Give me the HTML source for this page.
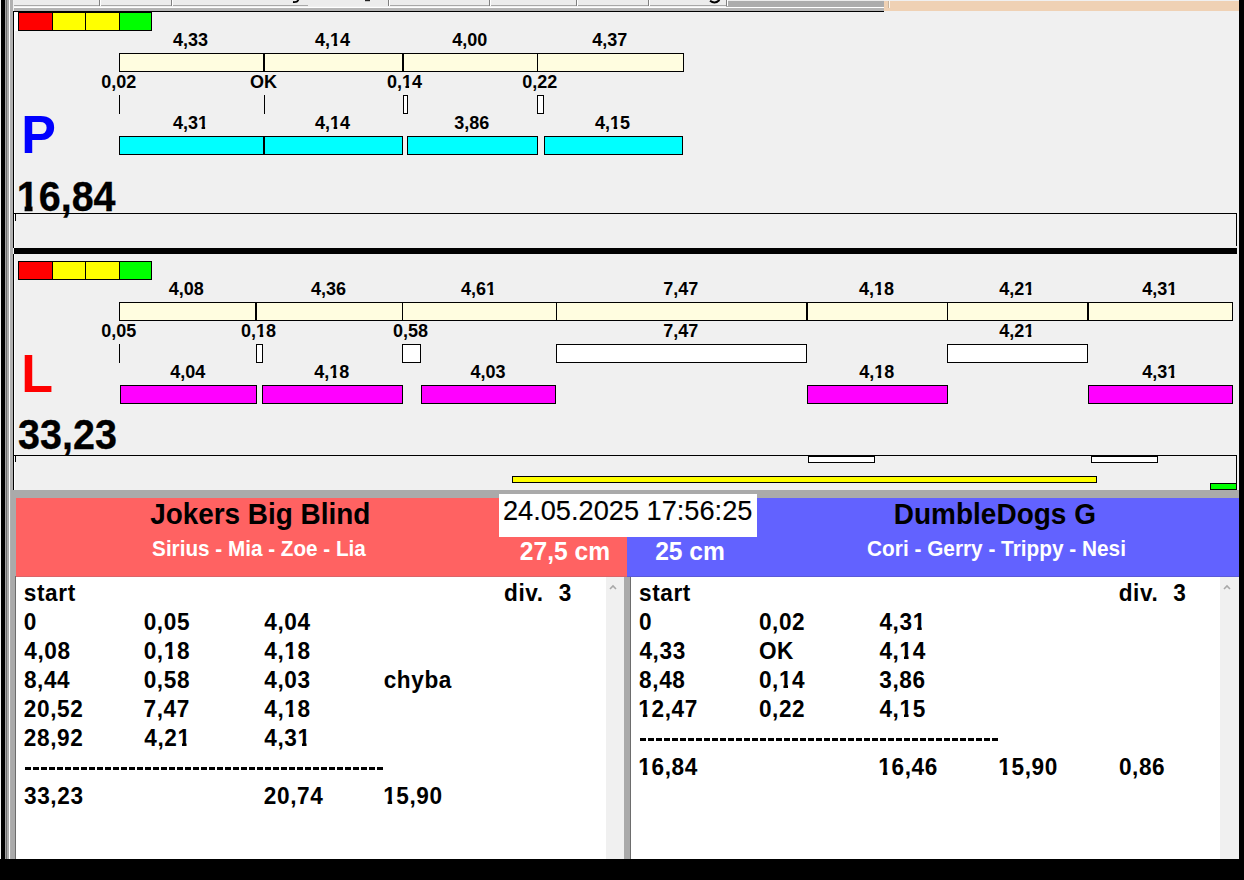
<!DOCTYPE html><html><head><meta charset="utf-8"><style>
html,body{margin:0;padding:0;width:1244px;height:880px;overflow:hidden;background:#f0f0f0;position:relative;font-family:"Liberation Sans",sans-serif}
div{box-sizing:border-box}
</style></head><body>
<div style="position:absolute;left:14px;top:0px;width:870px;height:6px;background:#ececec"></div>
<div style="position:absolute;left:14px;top:5px;width:294px;height:1px;background:#a8a8a8"></div>
<div style="position:absolute;left:388px;top:5px;width:496px;height:1px;background:#a8a8a8"></div>
<div style="position:absolute;left:726px;top:1px;width:158px;height:6px;background:#acacac"></div>
<div style="position:absolute;left:884px;top:1px;width:355px;height:10px;background:#efd1b4"></div>
<div style="position:absolute;left:99px;top:0px;width:1px;height:6px;background:#808080"></div>
<div style="position:absolute;left:100px;top:0px;width:1px;height:6px;background:#ffffff"></div>
<div style="position:absolute;left:171px;top:0px;width:1px;height:6px;background:#808080"></div>
<div style="position:absolute;left:172px;top:0px;width:1px;height:6px;background:#ffffff"></div>
<div style="position:absolute;left:388px;top:0px;width:1px;height:6px;background:#808080"></div>
<div style="position:absolute;left:389px;top:0px;width:1px;height:6px;background:#ffffff"></div>
<div style="position:absolute;left:489px;top:0px;width:1px;height:6px;background:#808080"></div>
<div style="position:absolute;left:490px;top:0px;width:1px;height:6px;background:#ffffff"></div>
<div style="position:absolute;left:576px;top:0px;width:1px;height:6px;background:#808080"></div>
<div style="position:absolute;left:577px;top:0px;width:1px;height:6px;background:#ffffff"></div>
<div style="position:absolute;left:648px;top:0px;width:1px;height:6px;background:#808080"></div>
<div style="position:absolute;left:649px;top:0px;width:1px;height:6px;background:#ffffff"></div>
<div style="position:absolute;left:726px;top:0px;width:1px;height:6px;background:#808080"></div>
<div style="position:absolute;left:727px;top:0px;width:1px;height:6px;background:#ffffff"></div>
<div style="position:absolute;left:14px;top:7px;width:870px;height:1px;background:#ffffff"></div>
<div style="position:absolute;left:14px;top:8px;width:870px;height:3px;background:#b4b4b4"></div>
<div style="position:absolute;left:13px;top:11px;width:871px;height:1px;background:#000"></div>
<div style="position:absolute;left:888px;top:1px;width:1px;height:7px;background:#c8b49e"></div>
<div style="position:absolute;left:889px;top:1px;width:1px;height:7px;background:#fff6ea"></div>
<svg style="position:absolute;left:706px;top:0px" width="16" height="5"><path d="M4 0.8 Q9 4.5 13.5 0" stroke="#000" stroke-width="2" fill="none"/></svg>
<svg style="position:absolute;left:290px;top:0px" width="10" height="5"><path d="M8.5 0 Q7 2.5 3 2" stroke="#000" stroke-width="1.8" fill="none"/></svg>
<svg style="position:absolute;left:364px;top:0px" width="8" height="4"><path d="M1 0.6 L6 0.6" stroke="#222" stroke-width="1.2" fill="none"/></svg>
<div style="position:absolute;left:1px;top:0px;width:4px;height:880px;background:#000"></div>
<div style="position:absolute;left:5px;top:0px;width:1px;height:880px;background:#a0a0a0"></div>
<div style="position:absolute;left:6px;top:0px;width:1px;height:880px;background:#707070"></div>
<div style="position:absolute;left:7px;top:0px;width:2px;height:880px;background:#aaaaaa"></div>
<div style="position:absolute;left:9px;top:0px;width:1px;height:880px;background:#ffffff"></div>
<div style="position:absolute;left:10px;top:0px;width:3px;height:880px;background:#b0b0b0"></div>
<div style="position:absolute;left:14px;top:12px;width:1px;height:478px;background:#ffffff"></div>
<div style="position:absolute;left:14px;top:12px;width:4px;height:19px;background:#ffffff"></div>
<div style="position:absolute;left:1239px;top:0px;width:5px;height:880px;background:#000"></div>
<div style="position:absolute;left:13px;top:11px;width:1px;height:237px;background:#000"></div>
<div style="position:absolute;left:18px;top:12px;width:35px;height:19px;background:#ff0000;border:1px solid #000;"></div>
<div style="position:absolute;left:52px;top:12px;width:34px;height:19px;background:#ffff00;border:1px solid #000;"></div>
<div style="position:absolute;left:85px;top:12px;width:35px;height:19px;background:#ffff00;border:1px solid #000;"></div>
<div style="position:absolute;left:119px;top:12px;width:33px;height:19px;background:#00ff00;border:1px solid #000;"></div>
<div style="position:absolute;left:119px;top:53px;width:145px;height:19px;background:#fffde0;border:1px solid #000;"></div>
<div style="position:absolute;left:264px;top:53px;width:139px;height:19px;background:#fffde0;border:1px solid #000;"></div>
<div style="position:absolute;left:403px;top:53px;width:135px;height:19px;background:#fffde0;border:1px solid #000;"></div>
<div style="position:absolute;left:537px;top:53px;width:147px;height:19px;background:#fffde0;border:1px solid #000;"></div>
<div style="position:absolute;left:172.93px;top:30.76px;font:bold 18px/18px 'Liberation Sans',sans-serif;color:#000;white-space:nowrap;letter-spacing:0px;">4,33</div>
<div style="position:absolute;left:315.03px;top:30.76px;font:bold 18px/18px 'Liberation Sans',sans-serif;color:#000;white-space:nowrap;letter-spacing:0px;">4,<span style="display:inline-block;clip-path:polygon(0 0,100% 0,100% 0.64em,0.40em 0.64em,0.40em 100%,0.20em 100%,0.20em 0.64em,0 0.64em)">1</span>4</div>
<div style="position:absolute;left:452.13px;top:30.76px;font:bold 18px/18px 'Liberation Sans',sans-serif;color:#000;white-space:nowrap;letter-spacing:0px;">4,00</div>
<div style="position:absolute;left:592.13px;top:30.76px;font:bold 18px/18px 'Liberation Sans',sans-serif;color:#000;white-space:nowrap;letter-spacing:0px;">4,37</div>
<div style="position:absolute;left:101.18px;top:72.76px;font:bold 18px/18px 'Liberation Sans',sans-serif;color:#000;white-space:nowrap;letter-spacing:0px;">0,02</div>
<div style="position:absolute;left:250.08px;top:72.76px;font:bold 18px/18px 'Liberation Sans',sans-serif;color:#000;white-space:nowrap;letter-spacing:0px;">OK</div>
<div style="position:absolute;left:386.88px;top:72.76px;font:bold 18px/18px 'Liberation Sans',sans-serif;color:#000;white-space:nowrap;letter-spacing:0px;">0,<span style="display:inline-block;clip-path:polygon(0 0,100% 0,100% 0.64em,0.40em 0.64em,0.40em 100%,0.20em 100%,0.20em 0.64em,0 0.64em)">1</span>4</div>
<div style="position:absolute;left:522.28px;top:72.76px;font:bold 18px/18px 'Liberation Sans',sans-serif;color:#000;white-space:nowrap;letter-spacing:0px;">0,22</div>
<div style="position:absolute;left:119px;top:95px;width:1px;height:19px;background:#000"></div>
<div style="position:absolute;left:264px;top:95px;width:1px;height:19px;background:#000"></div>
<div style="position:absolute;left:403px;top:95px;width:5px;height:19px;background:#fff;border:1px solid #000;"></div>
<div style="position:absolute;left:537px;top:95px;width:7px;height:19px;background:#fff;border:1px solid #000;"></div>
<div style="position:absolute;left:172.93px;top:113.76px;font:bold 18px/18px 'Liberation Sans',sans-serif;color:#000;white-space:nowrap;letter-spacing:0px;">4,3<span style="display:inline-block;clip-path:polygon(0 0,100% 0,100% 0.64em,0.40em 0.64em,0.40em 100%,0.20em 100%,0.20em 0.64em,0 0.64em)">1</span></div>
<div style="position:absolute;left:315.03px;top:113.76px;font:bold 18px/18px 'Liberation Sans',sans-serif;color:#000;white-space:nowrap;letter-spacing:0px;">4,<span style="display:inline-block;clip-path:polygon(0 0,100% 0,100% 0.64em,0.40em 0.64em,0.40em 100%,0.20em 100%,0.20em 0.64em,0 0.64em)">1</span>4</div>
<div style="position:absolute;left:454.25px;top:113.76px;font:bold 18px/18px 'Liberation Sans',sans-serif;color:#000;white-space:nowrap;letter-spacing:0px;">3,86</div>
<div style="position:absolute;left:595.03px;top:113.76px;font:bold 18px/18px 'Liberation Sans',sans-serif;color:#000;white-space:nowrap;letter-spacing:0px;">4,<span style="display:inline-block;clip-path:polygon(0 0,100% 0,100% 0.64em,0.40em 0.64em,0.40em 100%,0.20em 100%,0.20em 0.64em,0 0.64em)">1</span>5</div>
<div style="position:absolute;left:119px;top:136px;width:145px;height:19px;background:#00ffff;border:1px solid #000;"></div>
<div style="position:absolute;left:264px;top:136px;width:139px;height:19px;background:#00ffff;border:1px solid #000;"></div>
<div style="position:absolute;left:407px;top:136px;width:131px;height:19px;background:#00ffff;border:1px solid #000;"></div>
<div style="position:absolute;left:544px;top:136px;width:139px;height:19px;background:#00ffff;border:1px solid #000;"></div>
<div style="position:absolute;left:21.32px;top:109.28px;font:bold 52px/52px 'Liberation Sans',sans-serif;color:#0000ff;white-space:nowrap;letter-spacing:0px;transform:scale(1,1.02);transform-origin:0 44.02px;">P</div>
<div style="position:absolute;left:16.73px;top:177.56px;font:bold 39.5px/39.5px 'Liberation Sans',sans-serif;color:#000;white-space:nowrap;letter-spacing:0px;-webkit-text-stroke:0.3px #000;transform:scale(1,1.07);transform-origin:0 33.44px;"><span style="display:inline-block;clip-path:polygon(0 0,100% 0,100% 0.64em,0.40em 0.64em,0.40em 100%,0.20em 100%,0.20em 0.64em,0 0.64em)">1</span>6,84</div>
<div style="position:absolute;left:13px;top:213px;width:1224px;height:1px;background:#000"></div>
<div style="position:absolute;left:1236px;top:213px;width:1px;height:33px;background:#000"></div>
<div style="position:absolute;left:15px;top:214px;width:1px;height:7px;background:#000"></div>
<div style="position:absolute;left:14px;top:248px;width:1223px;height:6px;background:#000"></div>
<div style="position:absolute;left:13px;top:254px;width:1px;height:236px;background:#000"></div>
<div style="position:absolute;left:18px;top:261px;width:35px;height:19px;background:#ff0000;border:1px solid #000;"></div>
<div style="position:absolute;left:52px;top:261px;width:34px;height:19px;background:#ffff00;border:1px solid #000;"></div>
<div style="position:absolute;left:85px;top:261px;width:35px;height:19px;background:#ffff00;border:1px solid #000;"></div>
<div style="position:absolute;left:119px;top:261px;width:33px;height:19px;background:#00ff00;border:1px solid #000;"></div>
<div style="position:absolute;left:119px;top:302px;width:137px;height:19px;background:#fffde0;border:1px solid #000;"></div>
<div style="position:absolute;left:256px;top:302px;width:147px;height:19px;background:#fffde0;border:1px solid #000;"></div>
<div style="position:absolute;left:402px;top:302px;width:155px;height:19px;background:#fffde0;border:1px solid #000;"></div>
<div style="position:absolute;left:556px;top:302px;width:251px;height:19px;background:#fffde0;border:1px solid #000;"></div>
<div style="position:absolute;left:807px;top:302px;width:141px;height:19px;background:#fffde0;border:1px solid #000;"></div>
<div style="position:absolute;left:947px;top:302px;width:141px;height:19px;background:#fffde0;border:1px solid #000;"></div>
<div style="position:absolute;left:1088px;top:302px;width:145px;height:19px;background:#fffde0;border:1px solid #000;"></div>
<div style="position:absolute;left:168.83px;top:279.76px;font:bold 18px/18px 'Liberation Sans',sans-serif;color:#000;white-space:nowrap;letter-spacing:0px;">4,08</div>
<div style="position:absolute;left:311.03px;top:279.76px;font:bold 18px/18px 'Liberation Sans',sans-serif;color:#000;white-space:nowrap;letter-spacing:0px;">4,36</div>
<div style="position:absolute;left:461.03px;top:279.76px;font:bold 18px/18px 'Liberation Sans',sans-serif;color:#000;white-space:nowrap;letter-spacing:0px;">4,6<span style="display:inline-block;clip-path:polygon(0 0,100% 0,100% 0.64em,0.40em 0.64em,0.40em 100%,0.20em 100%,0.20em 0.64em,0 0.64em)">1</span></div>
<div style="position:absolute;left:663.19px;top:279.76px;font:bold 18px/18px 'Liberation Sans',sans-serif;color:#000;white-space:nowrap;letter-spacing:0px;">7,47</div>
<div style="position:absolute;left:858.93px;top:279.76px;font:bold 18px/18px 'Liberation Sans',sans-serif;color:#000;white-space:nowrap;letter-spacing:0px;">4,<span style="display:inline-block;clip-path:polygon(0 0,100% 0,100% 0.64em,0.40em 0.64em,0.40em 100%,0.20em 100%,0.20em 0.64em,0 0.64em)">1</span>8</div>
<div style="position:absolute;left:999.13px;top:279.76px;font:bold 18px/18px 'Liberation Sans',sans-serif;color:#000;white-space:nowrap;letter-spacing:0px;">4,2<span style="display:inline-block;clip-path:polygon(0 0,100% 0,100% 0.64em,0.40em 0.64em,0.40em 100%,0.20em 100%,0.20em 0.64em,0 0.64em)">1</span></div>
<div style="position:absolute;left:1142.13px;top:279.76px;font:bold 18px/18px 'Liberation Sans',sans-serif;color:#000;white-space:nowrap;letter-spacing:0px;">4,3<span style="display:inline-block;clip-path:polygon(0 0,100% 0,100% 0.64em,0.40em 0.64em,0.40em 100%,0.20em 100%,0.20em 0.64em,0 0.64em)">1</span></div>
<div style="position:absolute;left:101.18px;top:321.76px;font:bold 18px/18px 'Liberation Sans',sans-serif;color:#000;white-space:nowrap;letter-spacing:0px;">0,05</div>
<div style="position:absolute;left:241.08px;top:321.76px;font:bold 18px/18px 'Liberation Sans',sans-serif;color:#000;white-space:nowrap;letter-spacing:0px;">0,<span style="display:inline-block;clip-path:polygon(0 0,100% 0,100% 0.64em,0.40em 0.64em,0.40em 100%,0.20em 100%,0.20em 0.64em,0 0.64em)">1</span>8</div>
<div style="position:absolute;left:392.98px;top:321.76px;font:bold 18px/18px 'Liberation Sans',sans-serif;color:#000;white-space:nowrap;letter-spacing:0px;">0,58</div>
<div style="position:absolute;left:663.19px;top:321.76px;font:bold 18px/18px 'Liberation Sans',sans-serif;color:#000;white-space:nowrap;letter-spacing:0px;">7,47</div>
<div style="position:absolute;left:999.13px;top:321.76px;font:bold 18px/18px 'Liberation Sans',sans-serif;color:#000;white-space:nowrap;letter-spacing:0px;">4,2<span style="display:inline-block;clip-path:polygon(0 0,100% 0,100% 0.64em,0.40em 0.64em,0.40em 100%,0.20em 100%,0.20em 0.64em,0 0.64em)">1</span></div>
<div style="position:absolute;left:119px;top:344px;width:1px;height:19px;background:#000"></div>
<div style="position:absolute;left:256px;top:344px;width:7px;height:19px;background:#fff;border:1px solid #000;"></div>
<div style="position:absolute;left:402px;top:344px;width:19px;height:19px;background:#fff;border:1px solid #000;"></div>
<div style="position:absolute;left:556px;top:344px;width:251px;height:19px;background:#fff;border:1px solid #000;"></div>
<div style="position:absolute;left:947px;top:344px;width:141px;height:19px;background:#fff;border:1px solid #000;"></div>
<div style="position:absolute;left:170.13px;top:362.76px;font:bold 18px/18px 'Liberation Sans',sans-serif;color:#000;white-space:nowrap;letter-spacing:0px;">4,04</div>
<div style="position:absolute;left:314.23px;top:362.76px;font:bold 18px/18px 'Liberation Sans',sans-serif;color:#000;white-space:nowrap;letter-spacing:0px;">4,<span style="display:inline-block;clip-path:polygon(0 0,100% 0,100% 0.64em,0.40em 0.64em,0.40em 100%,0.20em 100%,0.20em 0.64em,0 0.64em)">1</span>8</div>
<div style="position:absolute;left:470.43px;top:362.76px;font:bold 18px/18px 'Liberation Sans',sans-serif;color:#000;white-space:nowrap;letter-spacing:0px;">4,03</div>
<div style="position:absolute;left:859.13px;top:362.76px;font:bold 18px/18px 'Liberation Sans',sans-serif;color:#000;white-space:nowrap;letter-spacing:0px;">4,<span style="display:inline-block;clip-path:polygon(0 0,100% 0,100% 0.64em,0.40em 0.64em,0.40em 100%,0.20em 100%,0.20em 0.64em,0 0.64em)">1</span>8</div>
<div style="position:absolute;left:1142.13px;top:362.76px;font:bold 18px/18px 'Liberation Sans',sans-serif;color:#000;white-space:nowrap;letter-spacing:0px;">4,3<span style="display:inline-block;clip-path:polygon(0 0,100% 0,100% 0.64em,0.40em 0.64em,0.40em 100%,0.20em 100%,0.20em 0.64em,0 0.64em)">1</span></div>
<div style="position:absolute;left:120px;top:385px;width:137px;height:19px;background:#ff00ff;border:1px solid #000;"></div>
<div style="position:absolute;left:262px;top:385px;width:141px;height:19px;background:#ff00ff;border:1px solid #000;"></div>
<div style="position:absolute;left:421px;top:385px;width:135px;height:19px;background:#ff00ff;border:1px solid #000;"></div>
<div style="position:absolute;left:807px;top:385px;width:141px;height:19px;background:#ff00ff;border:1px solid #000;"></div>
<div style="position:absolute;left:1088px;top:385px;width:145px;height:19px;background:#ff00ff;border:1px solid #000;"></div>
<div style="position:absolute;left:21.32px;top:348.28px;font:bold 52px/52px 'Liberation Sans',sans-serif;color:#ff0000;white-space:nowrap;letter-spacing:0px;transform:scale(1,1.02);transform-origin:0 44.02px;">L</div>
<div style="position:absolute;left:18.01px;top:415.56px;font:bold 39.5px/39.5px 'Liberation Sans',sans-serif;color:#000;white-space:nowrap;letter-spacing:0px;-webkit-text-stroke:0.3px #000;transform:scale(1,1.07);transform-origin:0 33.44px;">33,23</div>
<div style="position:absolute;left:13px;top:455px;width:1224px;height:1px;background:#000"></div>
<div style="position:absolute;left:1236px;top:455px;width:1px;height:35px;background:#000"></div>
<div style="position:absolute;left:15px;top:456px;width:1px;height:6px;background:#000"></div>
<div style="position:absolute;left:808px;top:456px;width:67px;height:7px;background:#fff;border:1px solid #000;"></div>
<div style="position:absolute;left:1091px;top:456px;width:67px;height:7px;background:#fff;border:1px solid #000;"></div>
<div style="position:absolute;left:512px;top:476px;width:585px;height:7px;background:#ffff00;border:1px solid #000;"></div>
<div style="position:absolute;left:1210px;top:483px;width:27px;height:7px;background:#00ff00;border:1px solid #000;"></div>
<div style="position:absolute;left:11px;top:490px;width:1228px;height:8px;background:#aaaaaa"></div>
<div style="position:absolute;left:11px;top:498px;width:5px;height:361px;background:#aaaaaa"></div>
<div style="position:absolute;left:16px;top:498px;width:611px;height:79px;background:#ff6262"></div>
<div style="position:absolute;left:627px;top:498px;width:612px;height:79px;background:#6262ff"></div>
<div style="position:absolute;left:150.18px;top:501.38px;font:bold 27.9px/27.9px 'Liberation Sans',sans-serif;color:#000;white-space:nowrap;letter-spacing:0px;transform:scale(1,1.04);transform-origin:0 23.62px;">Jokers&nbsp;Big&nbsp;Blind</div>
<div style="position:absolute;left:152.08px;top:538.88px;font:bold 20.7px/20.7px 'Liberation Sans',sans-serif;color:#fff;white-space:nowrap;letter-spacing:0px;transform:scale(1,1.05);transform-origin:0 17.52px;">Sirius&nbsp;-&nbsp;Mia&nbsp;-&nbsp;Zoe&nbsp;-&nbsp;Lia</div>
<div style="position:absolute;left:519.84px;top:540.48px;font:bold 24.6px/24.6px 'Liberation Sans',sans-serif;color:#fff;white-space:nowrap;letter-spacing:0px;transform:scale(1,1.03);transform-origin:0 20.82px;">27,5&nbsp;cm</div>
<div style="position:absolute;left:655.14px;top:540.48px;font:bold 24.6px/24.6px 'Liberation Sans',sans-serif;color:#fff;white-space:nowrap;letter-spacing:0px;transform:scale(1,1.03);transform-origin:0 20.82px;">25&nbsp;cm</div>
<div style="position:absolute;left:893.78px;top:501.3px;font:bold 28px/28px 'Liberation Sans',sans-serif;color:#000;white-space:nowrap;letter-spacing:0px;transform:scale(1,1.04);transform-origin:0 23.7px;">DumbleDogs&nbsp;G</div>
<div style="position:absolute;left:867.07px;top:538.79px;font:bold 20.8px/20.8px 'Liberation Sans',sans-serif;color:#fff;white-space:nowrap;letter-spacing:0px;transform:scale(1,1.05);transform-origin:0 17.61px;">Cori&nbsp;-&nbsp;Gerry&nbsp;-&nbsp;Trippy&nbsp;-&nbsp;Nesi</div>
<div style="position:absolute;left:499px;top:494px;width:258px;height:43px;background:#ffffff"></div>
<div style="position:absolute;left:502.94px;top:496.98px;font:normal 27.2px/27.2px 'Liberation Sans',sans-serif;color:#000;white-space:nowrap;letter-spacing:0px;-webkit-text-stroke:0.15px #000;transform:scale(1,1.03);transform-origin:0 23.02px;">24.05.2025&nbsp;17:56:25</div>
<div style="position:absolute;left:15px;top:576px;width:611px;height:283px;background:#6d6d6d"></div>
<div style="position:absolute;left:16px;top:576px;width:611px;height:1px;background:#dc6468"></div>
<div style="position:absolute;left:16px;top:577px;width:590px;height:282px;background:#ffffff"></div>
<div style="position:absolute;left:606px;top:577px;width:18px;height:282px;background:#f0f0f0"></div>
<div style="position:absolute;left:624px;top:577px;width:6px;height:282px;background:#aaaaaa"></div>
<div style="position:absolute;left:630px;top:577px;width:1px;height:282px;background:#6d6d6d"></div>
<div style="position:absolute;left:627px;top:576px;width:612px;height:1px;background:#5a5ad8"></div>
<div style="position:absolute;left:631px;top:577px;width:589px;height:282px;background:#ffffff"></div>
<div style="position:absolute;left:1220px;top:577px;width:19px;height:282px;background:#f0f0f0"></div>
<svg style="position:absolute;left:609px;top:584px" width="8" height="6"><path d="M1 5 L4 2 L7 5" stroke="#a8a8a8" stroke-width="1.6" fill="none"/></svg>
<svg style="position:absolute;left:1223px;top:584px" width="8" height="6"><path d="M1 5 L4 2 L7 5" stroke="#a8a8a8" stroke-width="1.6" fill="none"/></svg>
<div style="position:absolute;left:23.81px;top:582.87px;font:bold 22.6px/22.6px 'Liberation Sans',sans-serif;color:#000;white-space:nowrap;letter-spacing:0.6px;transform:scale(1,1.05);transform-origin:0 19.13px;">start</div>
<div style="position:absolute;left:23.7px;top:611.87px;font:bold 22.6px/22.6px 'Liberation Sans',sans-serif;color:#000;white-space:nowrap;letter-spacing:0.6px;transform:scale(1,1.05);transform-origin:0 19.13px;">0</div>
<div style="position:absolute;left:143.7px;top:611.87px;font:bold 22.6px/22.6px 'Liberation Sans',sans-serif;color:#000;white-space:nowrap;letter-spacing:0.6px;transform:scale(1,1.05);transform-origin:0 19.13px;">0,05</div>
<div style="position:absolute;left:264.26px;top:611.87px;font:bold 22.6px/22.6px 'Liberation Sans',sans-serif;color:#000;white-space:nowrap;letter-spacing:0.6px;transform:scale(1,1.05);transform-origin:0 19.13px;">4,04</div>
<div style="position:absolute;left:24.26px;top:640.87px;font:bold 22.6px/22.6px 'Liberation Sans',sans-serif;color:#000;white-space:nowrap;letter-spacing:0.6px;transform:scale(1,1.05);transform-origin:0 19.13px;">4,08</div>
<div style="position:absolute;left:143.7px;top:640.87px;font:bold 22.6px/22.6px 'Liberation Sans',sans-serif;color:#000;white-space:nowrap;letter-spacing:0.6px;transform:scale(1,1.05);transform-origin:0 19.13px;">0,<span style="display:inline-block;clip-path:polygon(0 0,100% 0,100% 0.64em,0.40em 0.64em,0.40em 100%,0.20em 100%,0.20em 0.64em,0 0.64em)">1</span>8</div>
<div style="position:absolute;left:264.26px;top:640.87px;font:bold 22.6px/22.6px 'Liberation Sans',sans-serif;color:#000;white-space:nowrap;letter-spacing:0.6px;transform:scale(1,1.05);transform-origin:0 19.13px;">4,<span style="display:inline-block;clip-path:polygon(0 0,100% 0,100% 0.64em,0.40em 0.64em,0.40em 100%,0.20em 100%,0.20em 0.64em,0 0.64em)">1</span>8</div>
<div style="position:absolute;left:23.92px;top:669.87px;font:bold 22.6px/22.6px 'Liberation Sans',sans-serif;color:#000;white-space:nowrap;letter-spacing:0.6px;transform:scale(1,1.05);transform-origin:0 19.13px;">8,44</div>
<div style="position:absolute;left:143.7px;top:669.87px;font:bold 22.6px/22.6px 'Liberation Sans',sans-serif;color:#000;white-space:nowrap;letter-spacing:0.6px;transform:scale(1,1.05);transform-origin:0 19.13px;">0,58</div>
<div style="position:absolute;left:264.26px;top:669.87px;font:bold 22.6px/22.6px 'Liberation Sans',sans-serif;color:#000;white-space:nowrap;letter-spacing:0.6px;transform:scale(1,1.05);transform-origin:0 19.13px;">4,03</div>
<div style="position:absolute;left:383.7px;top:669.87px;font:bold 22.6px/22.6px 'Liberation Sans',sans-serif;color:#000;white-space:nowrap;letter-spacing:0.6px;transform:scale(1,1.05);transform-origin:0 19.13px;">chyba</div>
<div style="position:absolute;left:23.81px;top:698.87px;font:bold 22.6px/22.6px 'Liberation Sans',sans-serif;color:#000;white-space:nowrap;letter-spacing:0.6px;transform:scale(1,1.05);transform-origin:0 19.13px;">20,52</div>
<div style="position:absolute;left:143.58px;top:698.87px;font:bold 22.6px/22.6px 'Liberation Sans',sans-serif;color:#000;white-space:nowrap;letter-spacing:0.6px;transform:scale(1,1.05);transform-origin:0 19.13px;">7,47</div>
<div style="position:absolute;left:264.26px;top:698.87px;font:bold 22.6px/22.6px 'Liberation Sans',sans-serif;color:#000;white-space:nowrap;letter-spacing:0.6px;transform:scale(1,1.05);transform-origin:0 19.13px;">4,<span style="display:inline-block;clip-path:polygon(0 0,100% 0,100% 0.64em,0.40em 0.64em,0.40em 100%,0.20em 100%,0.20em 0.64em,0 0.64em)">1</span>8</div>
<div style="position:absolute;left:23.81px;top:727.87px;font:bold 22.6px/22.6px 'Liberation Sans',sans-serif;color:#000;white-space:nowrap;letter-spacing:0.6px;transform:scale(1,1.05);transform-origin:0 19.13px;">28,92</div>
<div style="position:absolute;left:144.26px;top:727.87px;font:bold 22.6px/22.6px 'Liberation Sans',sans-serif;color:#000;white-space:nowrap;letter-spacing:0.6px;transform:scale(1,1.05);transform-origin:0 19.13px;">4,2<span style="display:inline-block;clip-path:polygon(0 0,100% 0,100% 0.64em,0.40em 0.64em,0.40em 100%,0.20em 100%,0.20em 0.64em,0 0.64em)">1</span></div>
<div style="position:absolute;left:264.26px;top:727.87px;font:bold 22.6px/22.6px 'Liberation Sans',sans-serif;color:#000;white-space:nowrap;letter-spacing:0.6px;transform:scale(1,1.05);transform-origin:0 19.13px;">4,3<span style="display:inline-block;clip-path:polygon(0 0,100% 0,100% 0.64em,0.40em 0.64em,0.40em 100%,0.20em 100%,0.20em 0.64em,0 0.64em)">1</span></div>
<div style="position:absolute;left:25.1px;top:767px;width:360px;height:3px;background:repeating-linear-gradient(90deg,#000 0 6px,transparent 6px 8px)"></div>
<div style="position:absolute;left:24.04px;top:785.87px;font:bold 22.6px/22.6px 'Liberation Sans',sans-serif;color:#000;white-space:nowrap;letter-spacing:0.6px;transform:scale(1,1.05);transform-origin:0 19.13px;">33,23</div>
<div style="position:absolute;left:263.81px;top:785.87px;font:bold 22.6px/22.6px 'Liberation Sans',sans-serif;color:#000;white-space:nowrap;letter-spacing:0.6px;transform:scale(1,1.05);transform-origin:0 19.13px;">20,74</div>
<div style="position:absolute;left:383.13px;top:785.87px;font:bold 22.6px/22.6px 'Liberation Sans',sans-serif;color:#000;white-space:nowrap;letter-spacing:0.6px;transform:scale(1,1.05);transform-origin:0 19.13px;"><span style="display:inline-block;clip-path:polygon(0 0,100% 0,100% 0.64em,0.40em 0.64em,0.40em 100%,0.20em 100%,0.20em 0.64em,0 0.64em)">1</span>5,90</div>
<div style="position:absolute;left:504.1px;top:582.87px;font:bold 22.6px/22.6px 'Liberation Sans',sans-serif;color:#000;white-space:nowrap;letter-spacing:0.6px;transform:scale(1,1.05);transform-origin:0 19.13px;">div.</div>
<div style="position:absolute;left:558.73px;top:582.87px;font:bold 22.6px/22.6px 'Liberation Sans',sans-serif;color:#000;white-space:nowrap;letter-spacing:0.6px;transform:scale(1,1.05);transform-origin:0 19.13px;">3</div>
<div style="position:absolute;left:639.01px;top:582.87px;font:bold 22.6px/22.6px 'Liberation Sans',sans-serif;color:#000;white-space:nowrap;letter-spacing:0.6px;transform:scale(1,1.05);transform-origin:0 19.13px;">start</div>
<div style="position:absolute;left:638.9px;top:611.87px;font:bold 22.6px/22.6px 'Liberation Sans',sans-serif;color:#000;white-space:nowrap;letter-spacing:0.6px;transform:scale(1,1.05);transform-origin:0 19.13px;">0</div>
<div style="position:absolute;left:758.9px;top:611.87px;font:bold 22.6px/22.6px 'Liberation Sans',sans-serif;color:#000;white-space:nowrap;letter-spacing:0.6px;transform:scale(1,1.05);transform-origin:0 19.13px;">0,02</div>
<div style="position:absolute;left:879.46px;top:611.87px;font:bold 22.6px/22.6px 'Liberation Sans',sans-serif;color:#000;white-space:nowrap;letter-spacing:0.6px;transform:scale(1,1.05);transform-origin:0 19.13px;">4,3<span style="display:inline-block;clip-path:polygon(0 0,100% 0,100% 0.64em,0.40em 0.64em,0.40em 100%,0.20em 100%,0.20em 0.64em,0 0.64em)">1</span></div>
<div style="position:absolute;left:639.46px;top:640.87px;font:bold 22.6px/22.6px 'Liberation Sans',sans-serif;color:#000;white-space:nowrap;letter-spacing:0.6px;transform:scale(1,1.05);transform-origin:0 19.13px;">4,33</div>
<div style="position:absolute;left:758.9px;top:640.87px;font:bold 22.6px/22.6px 'Liberation Sans',sans-serif;color:#000;white-space:nowrap;letter-spacing:0.6px;transform:scale(1,1.05);transform-origin:0 19.13px;">OK</div>
<div style="position:absolute;left:879.46px;top:640.87px;font:bold 22.6px/22.6px 'Liberation Sans',sans-serif;color:#000;white-space:nowrap;letter-spacing:0.6px;transform:scale(1,1.05);transform-origin:0 19.13px;">4,<span style="display:inline-block;clip-path:polygon(0 0,100% 0,100% 0.64em,0.40em 0.64em,0.40em 100%,0.20em 100%,0.20em 0.64em,0 0.64em)">1</span>4</div>
<div style="position:absolute;left:639.12px;top:669.87px;font:bold 22.6px/22.6px 'Liberation Sans',sans-serif;color:#000;white-space:nowrap;letter-spacing:0.6px;transform:scale(1,1.05);transform-origin:0 19.13px;">8,48</div>
<div style="position:absolute;left:758.9px;top:669.87px;font:bold 22.6px/22.6px 'Liberation Sans',sans-serif;color:#000;white-space:nowrap;letter-spacing:0.6px;transform:scale(1,1.05);transform-origin:0 19.13px;">0,<span style="display:inline-block;clip-path:polygon(0 0,100% 0,100% 0.64em,0.40em 0.64em,0.40em 100%,0.20em 100%,0.20em 0.64em,0 0.64em)">1</span>4</div>
<div style="position:absolute;left:879.23px;top:669.87px;font:bold 22.6px/22.6px 'Liberation Sans',sans-serif;color:#000;white-space:nowrap;letter-spacing:0.6px;transform:scale(1,1.05);transform-origin:0 19.13px;">3,86</div>
<div style="position:absolute;left:638.33px;top:698.87px;font:bold 22.6px/22.6px 'Liberation Sans',sans-serif;color:#000;white-space:nowrap;letter-spacing:0.6px;transform:scale(1,1.05);transform-origin:0 19.13px;"><span style="display:inline-block;clip-path:polygon(0 0,100% 0,100% 0.64em,0.40em 0.64em,0.40em 100%,0.20em 100%,0.20em 0.64em,0 0.64em)">1</span>2,47</div>
<div style="position:absolute;left:758.9px;top:698.87px;font:bold 22.6px/22.6px 'Liberation Sans',sans-serif;color:#000;white-space:nowrap;letter-spacing:0.6px;transform:scale(1,1.05);transform-origin:0 19.13px;">0,22</div>
<div style="position:absolute;left:879.46px;top:698.87px;font:bold 22.6px/22.6px 'Liberation Sans',sans-serif;color:#000;white-space:nowrap;letter-spacing:0.6px;transform:scale(1,1.05);transform-origin:0 19.13px;">4,<span style="display:inline-block;clip-path:polygon(0 0,100% 0,100% 0.64em,0.40em 0.64em,0.40em 100%,0.20em 100%,0.20em 0.64em,0 0.64em)">1</span>5</div>
<div style="position:absolute;left:640.3px;top:738px;width:360px;height:3px;background:repeating-linear-gradient(90deg,#000 0 6px,transparent 6px 8px)"></div>
<div style="position:absolute;left:638.33px;top:756.87px;font:bold 22.6px/22.6px 'Liberation Sans',sans-serif;color:#000;white-space:nowrap;letter-spacing:0.6px;transform:scale(1,1.05);transform-origin:0 19.13px;"><span style="display:inline-block;clip-path:polygon(0 0,100% 0,100% 0.64em,0.40em 0.64em,0.40em 100%,0.20em 100%,0.20em 0.64em,0 0.64em)">1</span>6,84</div>
<div style="position:absolute;left:878.33px;top:756.87px;font:bold 22.6px/22.6px 'Liberation Sans',sans-serif;color:#000;white-space:nowrap;letter-spacing:0.6px;transform:scale(1,1.05);transform-origin:0 19.13px;"><span style="display:inline-block;clip-path:polygon(0 0,100% 0,100% 0.64em,0.40em 0.64em,0.40em 100%,0.20em 100%,0.20em 0.64em,0 0.64em)">1</span>6,46</div>
<div style="position:absolute;left:998.33px;top:756.87px;font:bold 22.6px/22.6px 'Liberation Sans',sans-serif;color:#000;white-space:nowrap;letter-spacing:0.6px;transform:scale(1,1.05);transform-origin:0 19.13px;"><span style="display:inline-block;clip-path:polygon(0 0,100% 0,100% 0.64em,0.40em 0.64em,0.40em 100%,0.20em 100%,0.20em 0.64em,0 0.64em)">1</span>5,90</div>
<div style="position:absolute;left:1118.9px;top:756.87px;font:bold 22.6px/22.6px 'Liberation Sans',sans-serif;color:#000;white-space:nowrap;letter-spacing:0.6px;transform:scale(1,1.05);transform-origin:0 19.13px;">0,86</div>
<div style="position:absolute;left:1118.7px;top:582.87px;font:bold 22.6px/22.6px 'Liberation Sans',sans-serif;color:#000;white-space:nowrap;letter-spacing:0.6px;transform:scale(1,1.05);transform-origin:0 19.13px;">div.</div>
<div style="position:absolute;left:1173.34px;top:582.87px;font:bold 22.6px/22.6px 'Liberation Sans',sans-serif;color:#000;white-space:nowrap;letter-spacing:0.6px;transform:scale(1,1.05);transform-origin:0 19.13px;">3</div>
<div style="position:absolute;left:0px;top:859px;width:1244px;height:21px;background:#000"></div>
</body></html>
